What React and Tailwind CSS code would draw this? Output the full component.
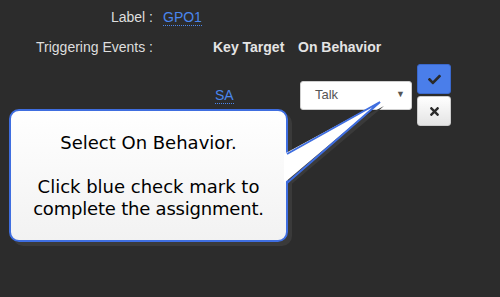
import React from "react";
import { FaCheck, FaTimes } from "react-icons/fa";

export default function App() {
  return (
    <div className="relative w-[500px] h-[297px] overflow-hidden bg-[#2c2c2c] text-[14px] text-[#dedede] font-['Liberation_Sans',Arial,sans-serif]">
      <div className="pt-[10px]">
        {/* Row 1 */}
        <div className="flex h-[15px] leading-[15px]">
          <div className="w-[153px] text-right">Label :</div>
          <div className="ml-[10px] text-[#4a86ee] border-b border-dotted border-[#4a86ee] h-[16px]">GPO1</div>
        </div>
        {/* Row 2 */}
        <div className="flex h-[15px] leading-[15px] mt-[15px]">
          <div className="w-[153px] text-right">Triggering Events :</div>
          <div className="ml-[60px] w-[85px] font-bold text-[#e4e4e4]">Key Target</div>
          <div className="font-bold text-[#e4e4e4]">On Behavior</div>
        </div>
        {/* Row 3 */}
        <div className="flex items-center mt-[9px] h-[62px]">
          <div className="ml-[215px] w-[85px]">
            <span className="text-[#4a86ee] border-b border-dotted border-[#4a86ee] leading-[15px] inline-block h-[16px]">SA</span>
          </div>
          <div className="w-[112px] h-[29px] bg-white border border-[#cfcfcf] rounded-[3px] flex items-center pl-[14px] pr-[6px] text-[#555] text-[13px]">
            <span className="flex-1">Talk</span>
            <span className="text-[9px] text-[#555]">▼</span>
          </div>
          <div className="ml-[5px] flex flex-col gap-[2px]">
            <div className="w-[34px] h-[30px] bg-[#4a7eea] border border-[#3a68cc] rounded-[3px] flex items-center justify-center text-[#2a2a2a]">
              <FaCheck size={13} />
            </div>
            <div className="w-[34px] h-[30px] bg-gradient-to-b from-white to-[#e4e4e4] border border-[#cccccc] rounded-[3px] flex items-center justify-center text-[#2a2a2a]">
              <FaTimes size={13} />
            </div>
          </div>
        </div>
      </div>

      {/* Tail shadow */}
      <svg className="absolute left-0 top-0" width="500" height="297">
        <polygon points="288,157 384,106 288,187" fill="#3a3a3a" />
      </svg>

      {/* Callout */}
      <div className="absolute left-[9px] top-[109px] w-[279px] h-[133px] rounded-[10px] border-2 border-[#3f6ee0] bg-gradient-to-b from-white to-[#f2f2f2] shadow-[4px_4px_0_#3a3a3a] flex flex-col justify-center items-center text-center text-black text-[18px] leading-[22px] font-['DejaVu_Sans',sans-serif]">
        <div>Select On Behavior.</div>
        <div>&nbsp;</div>
        <div>Click blue check mark to</div>
        <div className="tracking-[-0.2px]">complete the assignment.</div>
      </div>

      {/* Tail */}
      <svg className="absolute left-0 top-0" width="500" height="297">
        <polygon points="284,154 380,102 284,183" fill="#ffffff" />
        <polyline points="287,154 380,102 287,183" fill="none" stroke="#3f6ee0" strokeWidth="2" strokeLinejoin="miter" />
      </svg>
    </div>
  );
}
